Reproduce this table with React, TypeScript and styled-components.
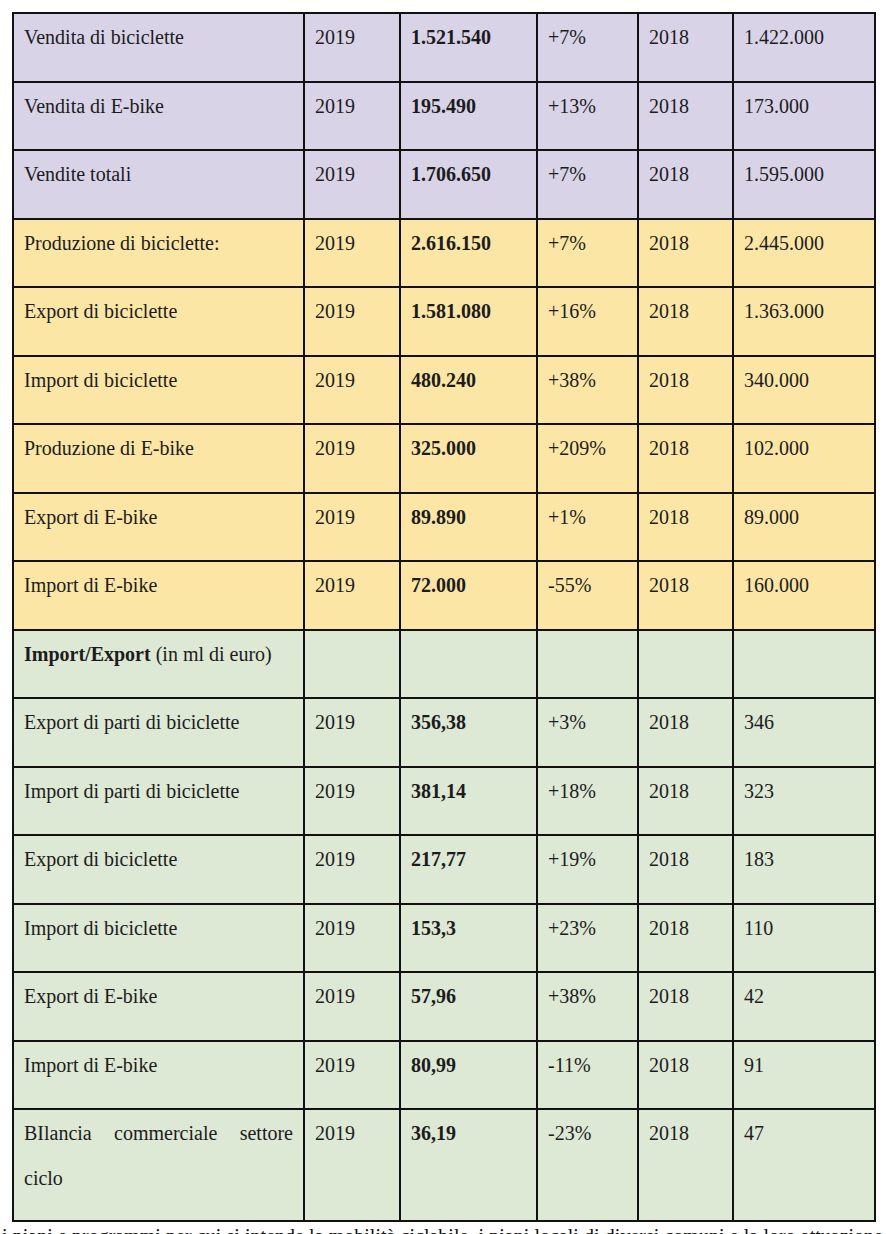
import React from "react";
import styled, { createGlobalStyle } from "styled-components";

const Global = createGlobalStyle`
  html, body { margin: 0; padding: 0; background: #ffffff; }
  body { font-family: "Liberation Serif", "Times New Roman", serif; color: #1c1c1c; }
`;

const Page = styled.div`
  padding: 12px 11px 0 12px;
  width: 863px;
`;

const Table = styled.table`
  border-collapse: collapse;
  table-layout: fixed;
  width: 862px;
  font-family: "Liberation Serif", "Times New Roman", serif;
  font-size: 20px;
  color: #1c1c1c;
`;

type Tone = "violet" | "yellow" | "green";
const toneColor: Record<Tone, string> = {
  violet: "#d9d3e8",
  yellow: "#fbe6a5",
  green: "#dde8d5",
};

const Row = styled.tr<{ $tone: Tone }>`
  background: ${(p) => toneColor[p.$tone]};
`;

const Cell = styled.td<{ $bold?: boolean; $justify?: boolean }>`
  border: 2px solid #111111;
  padding: 1px 10px ${(p) => (p.$justify ? "19px" : "20.5px")} 10px;
  line-height: 45px;
  vertical-align: top;
  font-weight: ${(p) => (p.$bold ? 700 : 400)};
  text-align: ${(p) => (p.$justify ? "justify" : "left")};
  text-align-last: left;
`;

const Strong = styled.b`
  font-weight: 700;
`;

const Footer = styled.p`
  margin: 0 -8px 0 -10px;
  padding: 3px 0 0 0;
  font-family: "Liberation Serif", "Times New Roman", serif;
  font-size: 20px;
  line-height: 22px;
  color: #111111;
  text-align: justify;
`;

type Data = [string, string, string, string, string, string];

const violet: Data[] = [
  ["Vendita di biciclette", "2019", "1.521.540", "+7%", "2018", "1.422.000"],
  ["Vendita di E-bike", "2019", "195.490", "+13%", "2018", "173.000"],
  ["Vendite totali", "2019", "1.706.650", "+7%", "2018", "1.595.000"],
];

const yellow: Data[] = [
  ["Produzione di biciclette:", "2019", "2.616.150", "+7%", "2018", "2.445.000"],
  ["Export di biciclette", "2019", "1.581.080", "+16%", "2018", "1.363.000"],
  ["Import di biciclette", "2019", "480.240", "+38%", "2018", "340.000"],
  ["Produzione di E-bike", "2019", "325.000", "+209%", "2018", "102.000"],
  ["Export di E-bike", "2019", "89.890", "+1%", "2018", "89.000"],
  ["Import di E-bike", "2019", "72.000", "-55%", "2018", "160.000"],
];

const green: Data[] = [
  ["Export di parti di biciclette", "2019", "356,38", "+3%", "2018", "346"],
  ["Import di parti di biciclette", "2019", "381,14", "+18%", "2018", "323"],
  ["Export di biciclette", "2019", "217,77", "+19%", "2018", "183"],
  ["Import di biciclette", "2019", "153,3", "+23%", "2018", "110"],
  ["Export di E-bike", "2019", "57,96", "+38%", "2018", "42"],
  ["Import di E-bike", "2019", "80,99", "-11%", "2018", "91"],
  ["BIlancia commerciale settore ciclo", "2019", "36,19", "-23%", "2018", "47"],
];

const widths = [291, 96, 137, 101, 95, 142];

const DataRow: React.FC<{ tone: Tone; d: Data; justify?: boolean }> = ({ tone, d, justify }) => (
  <Row $tone={tone}>
    <Cell $justify={justify}>{d[0]}</Cell>
    <Cell>{d[1]}</Cell>
    <Cell $bold>{d[2]}</Cell>
    <Cell>{d[3]}</Cell>
    <Cell>{d[4]}</Cell>
    <Cell>{d[5]}</Cell>
  </Row>
);

export default function App() {
  return (
    <>
      <Global />
      <Page>
        <Table>
          <colgroup>
            {widths.map((w, i) => (
              <col key={i} style={{ width: w }} />
            ))}
          </colgroup>
          <tbody>
            {violet.map((d, i) => (
              <DataRow key={"v" + i} tone="violet" d={d} />
            ))}
            {yellow.map((d, i) => (
              <DataRow key={"y" + i} tone="yellow" d={d} />
            ))}
            <Row $tone="green">
              <Cell>
                <Strong>Import/Export</Strong> (in ml di euro)
              </Cell>
              <Cell />
              <Cell />
              <Cell />
              <Cell />
              <Cell />
            </Row>
            {green.map((d, i) => (
              <DataRow key={"g" + i} tone="green" d={d} justify={i === green.length - 1} />
            ))}
          </tbody>
        </Table>
        <Footer>
          i piani e programmi per cui si intende la mobilità ciclabile, i piani locali di diversi comuni e la loro attuazione (ciclovie, piste e corsie ciclabili) nel territorio.
        </Footer>
      </Page>
    </>
  );
}
